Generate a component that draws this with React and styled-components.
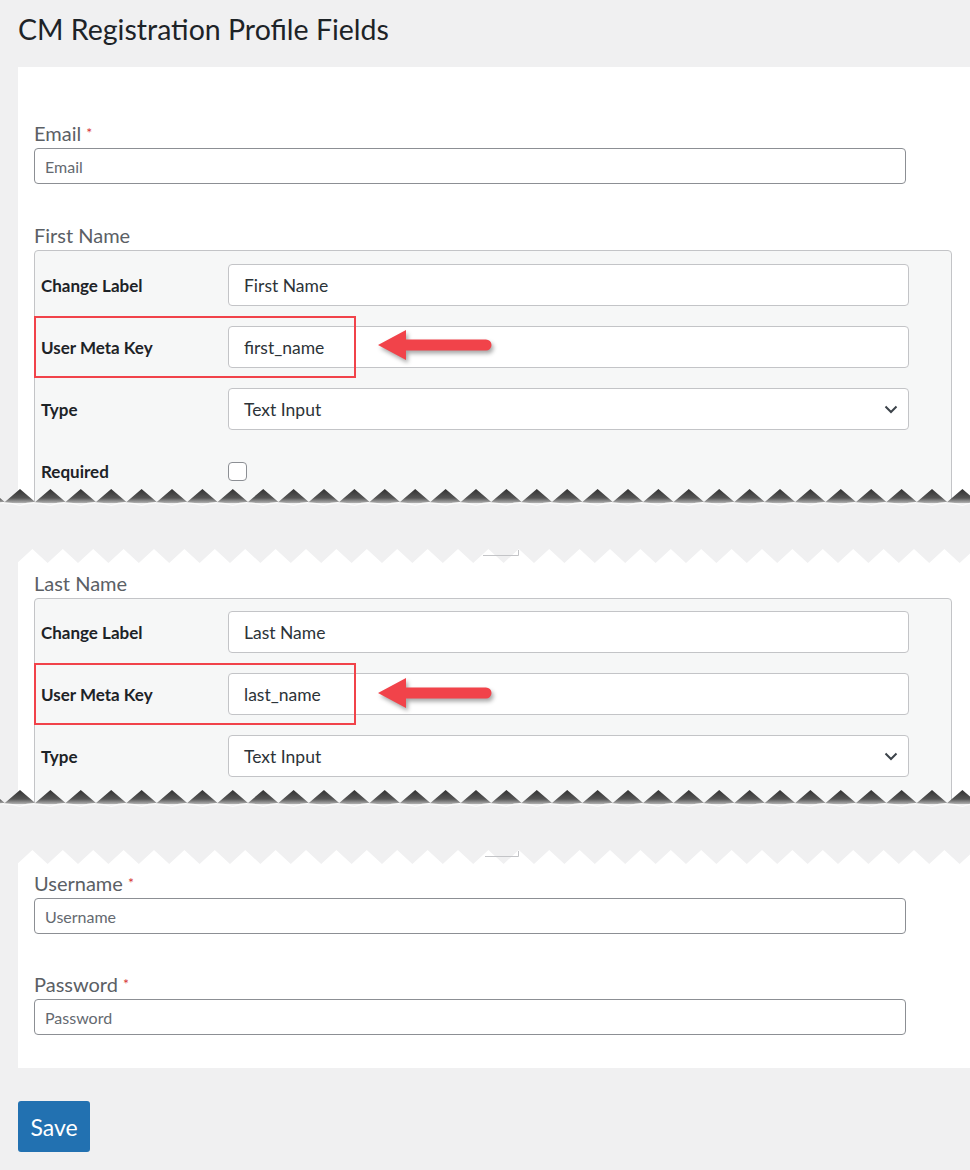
import React from 'react'
import styled, { createGlobalStyle } from 'styled-components';

const W = 970;
const P = 30.4;

function TornBottom() {
    const pts = [];
    const wave = [];
    for (let x = 20 - P; x < W + P; x += P) {
        pts.push(`${(x - P / 2).toFixed(1)},15`, `${x.toFixed(1)},2`);
        wave.push([x - P / 2, x]);
    }
    let d = `M${(wave[0][0] - P / 2).toFixed(1)} 18`;
    wave.forEach(([v, p]) => {
        d += ` Q${(v - P / 4).toFixed(1)} 15.5 ${v.toFixed(1)} 15.8 Q${(v + P / 4).toFixed(1)} 16 ${p.toFixed(1)} 18.5`;
    });
    return (
        <EdgeSvg $side="bottom" width={W} height="24" viewBox={`0 0 ${W} 24`}>
            <defs>
                <linearGradient id="tearShade" x1="0" y1="2" x2="0" y2="17" gradientUnits="userSpaceOnUse">
                    <stop offset="0" stopColor="#333" />
                    <stop offset="0.6" stopColor="#555" />
                    <stop offset="1" stopColor="#c4c4c4" />
                </linearGradient>
            </defs>
            <rect x="0" y="14" width={W} height="10" fill="#f0f0f1" />
            <polygon points={`0,16 ${pts.join(' ')} ${W},16`} fill="url(#tearShade)" />
            <path d={d} fill="none" stroke="#fbfbfb" strokeWidth="1.3" />
        </EdgeSvg>
    );
}

function TornTop({ scrap }) {
    const pts = [];
    for (let x = 2 - P; x < W + P; x += P) {
        pts.push(`${x.toFixed(1)},0`, `${(x + P / 2).toFixed(1)},14`);
    }
    return (
        <EdgeSvg $side="top" width={W} height="16" viewBox={`0 0 ${W} 16`}>
            <polygon points={`0,0 ${pts.join(' ')} ${W},0`} fill="#f0f0f1" />
            <path d={`M${scrap} 6.5 H518.5 V1`} fill="none" stroke="#c3c4c7" strokeWidth="1" />
        </EdgeSvg>
    );
}

function Arrow() {
    return (
        <ArrowSvg width="124" height="40" viewBox="0 0 124 40">
            <path d="M2 18 L30 3 L30 12.5 L110 12.5 A5.5 5.5 0 0 1 110 23.5 L30 23.5 L30 33 Z" fill="#f1434a" />
        </ArrowSvg>
    );
}

function Chevron() {
    return (
        <svg width="14" height="9" viewBox="0 0 14 9">
            <path d="M1.5 1.5 L7 7 L12.5 1.5" fill="none" stroke="#3c434a" strokeWidth="2" />
        </svg>
    );
}

function SettingsBox({ label, metaKey, showRequired, arrowTop, boxTop }) {
    return (
        <>
            <FieldLabel>{label}</FieldLabel>
            <Box $padTop={boxTop}>
                <SettingRow>
                    <RowLabel>Change Label</RowLabel>
                    <BoxInput readOnly value={label} />
                </SettingRow>
                <SettingRow>
                    <Highlight />
                    <RowLabel>User Meta Key</RowLabel>
                    <BoxInput readOnly value={metaKey} />
                    <ArrowSpot $top={arrowTop}><Arrow /></ArrowSpot>
                </SettingRow>
                <SettingRow>
                    <RowLabel>Type</RowLabel>
                    <SelectBox>
                        <span>Text Input</span>
                        <Chevron />
                    </SelectBox>
                </SettingRow>
                {showRequired && (
                    <SettingRow>
                        <RowLabel>Required</RowLabel>
                        <Checkbox type="checkbox" />
                    </SettingRow>
                )}
            </Box>
        </>
    );
}

function App() {
    return (
        <Page>
            <GlobalStyle />
            <Fragment $height={511}>
                <Title>CM Registration Profile Fields</Title>
                <Card $padTop={54}>
                    <FieldLabel>Email <Req>*</Req></FieldLabel>
                    <TextInput placeholder="Email" />
                    <Spacer $h={39} />
                    <SettingsBox label="First Name" metaKey="first_name" showRequired arrowTop={1} boxTop={13} />
                </Card>
                <TornBottom />
            </Fragment>

            <Fragment $height={263} $gap={38}>
                <TornTop scrap={483} />
                <Card $padTop={22}>
                    <SettingsBox label="Last Name" metaKey="last_name" arrowTop={2} boxTop={12} />
                </Card>
                <TornBottom />
            </Fragment>

            <Fragment $gap={38}>
                <TornTop scrap={485} />
                <Card $padTop={21} $padBottom={33}>
                    <FieldLabel>Username <Req>*</Req></FieldLabel>
                    <TextInput placeholder="Username" />
                    <Spacer $h={38} />
                    <FieldLabel>Password <Req>*</Req></FieldLabel>
                    <TextInput placeholder="Password" />
                </Card>
                <SaveButton>Save</SaveButton>
            </Fragment>
        </Page>
    )
}

export default App;

const GlobalStyle = createGlobalStyle`
    body {
        margin: 0;
        background: #f0f0f1;
        font-family: Lato, "Open Sans", sans-serif;
        color: #1d2327;
    }
    * { box-sizing: border-box; }
`;

const Page = styled.div`
    width: 970px;
    min-height: 1170px;
    background: #f0f0f1;
    overflow: hidden;
`;

const Fragment = styled.section`
    position: relative;
    display: flex;
    flex-direction: column;
    margin-top: ${p => p.$gap || 0}px;
    height: ${p => p.$height ? `${p.$height}px` : 'auto'};
    overflow: hidden;
`;

const EdgeSvg = styled.svg`
    position: absolute;
    left: 0;
    ${p => p.$side === 'top' ? 'top: 0;' : 'bottom: 0;'}
    z-index: 5;
    display: block;
`;

const Title = styled.h1`
    flex-shrink: 0;
    margin: 0;
    padding: 11px 0 0 18px;
    height: 67px;
    font-size: 28.5px;
    font-weight: 400;
    line-height: 36px;
    color: #1d2327;
`;

const Card = styled.div`
    flex: 1 0 auto;
    margin-left: 18px;
    background: #fff;
    padding: ${p => p.$padTop}px 18px ${p => p.$padBottom || 0}px 16px;
`;

const Spacer = styled.div`
    height: ${p => p.$h}px;
`;

const FieldLabel = styled.div`
    font-size: 20px;
    line-height: 24px;
    color: #5b6065;
    margin-bottom: 3px;
`;

const Req = styled.span`
    color: #d63638;
    font-size: 14px;
    vertical-align: top;
`;

const TextInput = styled.input`
    display: block;
    width: 872px;
    height: 36px;
    margin-top: 1px;
    padding: 0 10px;
    border: 1px solid #8c8f94;
    border-radius: 4px;
    font-family: Lato, "Open Sans", sans-serif;
    font-size: 16px;
    color: #2c3338;
    background: #fff;
    outline: none;

    &::placeholder {
        color: #646970;
    }
`;

const Box = styled.div`
    display: flex;
    flex-direction: column;
    gap: 20px;
    padding: ${p => p.$padTop}px 42px 60px 6px;
    background: #f6f7f7;
    border: 1px solid #c3c4c7;
    border-radius: 4px;
`;

const SettingRow = styled.div`
    position: relative;
    display: grid;
    grid-template-columns: 187px 1fr;
    align-items: center;
    min-height: 42px;
`;

const RowLabel = styled.div`
    font-size: 17px;
    font-weight: 700;
    color: #1d2327;
`;

const BoxInput = styled.input`
    height: 42px;
    width: 100%;
    padding: 0 15px;
    border: 1px solid #c3c4c7;
    border-radius: 4px;
    background: #fff;
    font-family: Lato, "Open Sans", sans-serif;
    font-size: 17.5px;
    color: #2c3338;
    outline: none;
`;

const SelectBox = styled.div`
    height: 42px;
    display: flex;
    align-items: center;
    justify-content: space-between;
    padding: 0 10px 0 15px;
    border: 1px solid #c3c4c7;
    border-radius: 4px;
    background: #fff;
    font-size: 17.5px;
    color: #2c3338;
`;

const Checkbox = styled.input`
    appearance: none;
    margin: 0;
    width: 19px;
    height: 19px;
    border: 1px solid #8c8f94;
    border-radius: 4px;
    background: #fff;
`;

const Highlight = styled.div`
    position: absolute;
    left: -7px;
    top: -10px;
    width: 322px;
    height: 62px;
    border: 2px solid #f1434a;
    pointer-events: none;
    z-index: 2;
`;

const ArrowSpot = styled.div`
    position: absolute;
    left: 335px;
    top: ${p => p.$top}px;
    z-index: 3;
`;

const ArrowSvg = styled.svg`
    display: block;
    filter: drop-shadow(2px 3px 2px rgba(0, 0, 0, 0.35));
`;

const SaveButton = styled.button`
    align-self: flex-start;
    margin: 33px 0 0 18px;
    width: 72px;
    height: 51px;
    border: 0;
    border-radius: 3px;
    background: #2271b1;
    color: #fff;
    font-family: Lato, "Open Sans", sans-serif;
    font-size: 23px;
    padding: 0;
`;
